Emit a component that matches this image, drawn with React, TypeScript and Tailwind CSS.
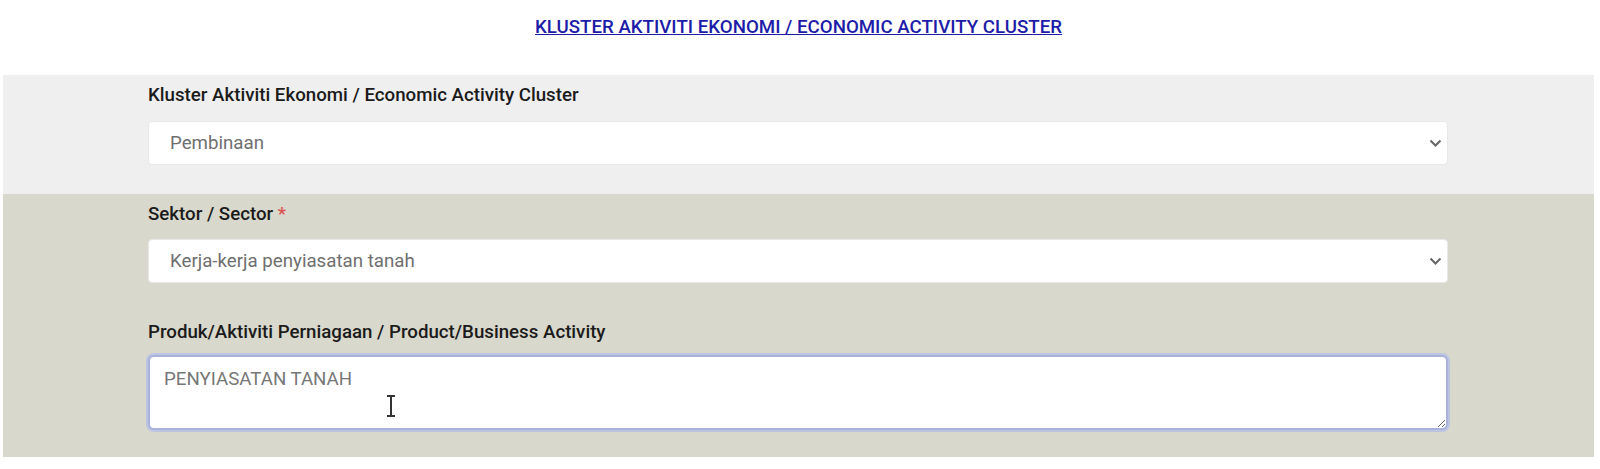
const font = { fontFamily: "Roboto, 'Liberation Sans', sans-serif" };

const SelectField = ({ value }: { value: string }) => {
  return (
    <div className="relative h-[44px] w-full">
      <select
        defaultValue={value}
        className="h-full w-full appearance-none rounded-[4px] border border-[#e8e8e8] bg-white pl-[21px] pr-10 text-[18.7px] text-[#6f6f6f] outline-none"
      >
        <option>{value}</option>
      </select>
      <svg
        className="pointer-events-none absolute right-[6px] top-[18px]"
        width="13"
        height="8"
        viewBox="0 0 13 8"
      >
        <path d="M1.5 1.5l5 5 5-5" stroke="#666" strokeWidth="2" fill="none" />
      </svg>
    </div>
  );
};

export default function App() {
  return (
    <div className="w-full min-h-[469px] bg-white pl-[3px] pr-[6px]" style={font}>
      {/* title */}
      <div className="flex h-[75px] justify-center pt-[15px]">
        <a href="#" className="h-[24px] text-[18.7px] font-medium leading-[24px] text-[#1c1ca8] underline">
          KLUSTER AKTIVITI EKONOMI / ECONOMIC ACTIVITY CLUSTER
        </a>
      </div>

      {/* cluster */}
      <div className="bg-[#efefef] pl-[145px] pr-[146px] pt-[9px] pb-[29px]">
        <label className="block h-[22px] text-[18.7px] font-medium leading-[22px] text-[#1b1b1b]">
          Kluster Aktiviti Ekonomi / Economic Activity Cluster
        </label>
        <div className="mt-[15px]">
          <SelectField value="Pembinaan" />
        </div>
      </div>

      {/* sector + activity */}
      <div className="bg-[#d9d8cc] pl-[145px] pr-[146px] pt-[9px] pb-[27px]">
        <label className="block h-[22px] text-[18.7px] font-medium leading-[22px] text-[#1b1b1b]">
          Sektor / Sector <span className="text-[#d9534f]">*</span>
        </label>
        <div className="mt-[14px]">
          <SelectField value="Kerja-kerja penyiasatan tanah" />
        </div>

        <label className="mt-[38px] block h-[22px] text-[18.7px] font-medium leading-[22px] text-[#1b1b1b]">
          Produk/Aktiviti Perniagaan / Product/Business Activity
        </label>
        <div className="relative mt-[12px]">
          <textarea
            defaultValue="PENYIASATAN TANAH"
            className="block h-[75px] w-full rounded-[6px] border-2 border-[#a9b3da] bg-white px-[14px] pt-[10px] text-[18.7px] leading-[24px] text-[#777] shadow-[0_0_0_2px_#bcc4e2] outline-none"
          />
          <svg
            className="pointer-events-none absolute left-[236px] top-[39px]"
            width="14"
            height="24"
            viewBox="0 0 14 24"
          >
            <path d="M3 2h8M7 2v20M3 22h8" stroke="#333" strokeWidth="2" fill="none" />
          </svg>
        </div>
      </div>
    </div>
  );
}
